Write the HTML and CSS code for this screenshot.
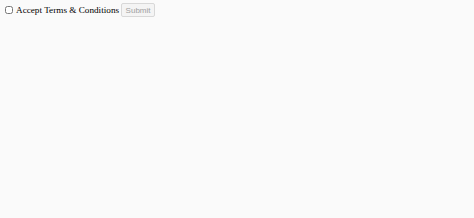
FILE: index.html
```html
<!DOCTYPE html>
<html lang="en">

<head>
    <meta charset="UTF-8">
    <meta name="viewport" content="width=device-width, initial-scale=1.0">
    <title>Terms</title>

    <link rel="stylesheet" href="styles.css">
</head>

<body>
    <form class="terms-form">
        <label class="terms-label">
            <input type="checkbox" class="terms-check">
            Accept Terms &amp; Conditions
        </label>
        <button type="submit" class="submit-button" disabled>Submit</button>
    </form>
</body>

</html>
```

FILE: styles.css
```css
body {
    margin: 0;
    padding: 3px 5px;
    background-color: #fafafa;
    font-family: "Liberation Serif", "Times New Roman", serif;
    font-size: 9.2px;
    color: #000;
}

.terms-form {
    display: flex;
    align-items: center;
}

.terms-label {
    display: flex;
    align-items: center;
}

.terms-check {
    width: 8px;
    height: 8px;
    margin: 0 3px 0 0;
}

.submit-button {
    margin-left: 2px;
    height: 14px;
    width: 34px;
    padding: 0;
    font-family: Arial, Helvetica, sans-serif;
    font-size: 8px;
    color: #a0a0a0;
    background-color: #f4f4f4;
    border: 1px solid #d8d8d8;
    border-radius: 2px;
}
```
